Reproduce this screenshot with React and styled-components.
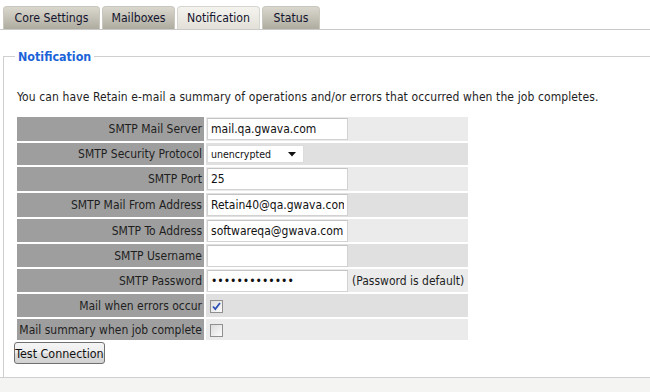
import React from "react";
import styled, { createGlobalStyle } from "styled-components";

const Global = createGlobalStyle`
  html, body { margin: 0; padding: 0; background: #fff; }
  body { font-family: "DejaVu Sans Condensed", "DejaVu Sans", Tahoma, sans-serif; font-size: 12px; color: #1e1e1e; }
  * { box-sizing: border-box; }
`;

const Page = styled.div`
  width: 650px;
  height: 392px;
  display: flex;
  flex-direction: column;
  background: #f4f4f3;
  overflow: hidden;
`;

const Main = styled.div`
  background: #fff;
  padding-top: 6px;
  border-bottom: 1px solid #cfcfcf;
`;

const TabBar = styled.div`
  display: flex;
  gap: 2px;
  padding-left: 3px;
  border-bottom: 1px solid #c9c9c9;
  height: 24px;
`;

const Tab = styled.div`
  width: ${(p) => p.$w}px;
  height: 23px;
  display: flex;
  align-items: center;
  justify-content: center;
  border: 1px solid ${(p) => (p.$active ? "#d6d5cf" : "#c9c7bd")};
  border-bottom: none;
  border-radius: 4px 4px 0 0;
  color: #14142e;
  font-size: 12.2px;
  background: ${(p) =>
    p.$active ? "linear-gradient(#f4f3ee, #e2e0d8)" : "linear-gradient(#dad8ce, #aeab9f)"};
`;

const Fieldset = styled.fieldset`
  margin: 19px 0 0 3px;
  padding: 0 0 13px 10px;
  border: 1px solid #cfcfcf;
  border-right: none;
  border-bottom: none;
  min-width: 0;
`;

const Legend = styled.legend`
  margin-left: 1px;
  padding: 0 3px;
  color: #1b63d8;
  font-weight: bold;
  font-size: 12.4px;
`;

const Intro = styled.p`
  margin: 26px 0 10px 3px;
  line-height: 15px;
  letter-spacing: 0.1px;
`;

const Table = styled.table`
  border-collapse: separate;
  border-spacing: 2px;
  margin-left: 1px;
  width: 455px;
`;

const LabelCell = styled.td`
  background: #9e9e9e;
  text-align: right;
  white-space: nowrap;
  padding: 0 2px;
  width: 187px;
  height: ${(p) => p.$h}px;
  color: #1e1e1e;
`;

const ValueCell = styled.td`
  background: ${(p) => (p.$alt ? "#e0e0e0" : "#ebebeb")};
  padding: 0 1px;
  height: ${(p) => p.$h}px;
  white-space: nowrap;
`;

const TextInput = styled.input`
  width: 141px;
  height: 22px;
  border: 1px solid #d2d2d2;
  border-top-color: #c4c4c4;
  background: #fff;
  font-family: inherit;
  font-size: 12px;
  padding: 0 3px;
  color: #111;
  vertical-align: middle;
  outline: none;
`;

const SelectBox = styled.div`
  display: inline-flex;
  align-items: center;
  justify-content: space-between;
  width: 97px;
  height: 18px;
  border: 1px solid #dcdcdc;
  background: #fff;
  font-size: 10.5px;
  padding: 0 7px 0 3px;
  color: #111;
  vertical-align: middle;
`;

const Hint = styled.span`
  margin-left: 4px;
  vertical-align: middle;
`;

const Check = styled.span`
  display: inline-flex;
  align-items: center;
  justify-content: center;
  width: 13px;
  height: 13px;
  margin-left: 3px;
  border: 1px solid #8f8f8f;
  background: linear-gradient(135deg, #dcdcdc, #fbfbfb);
  vertical-align: middle;
`;

const Button = styled.button`
  margin-top: 0;
  height: 22px;
  width: 91px;
  padding: 0;
  border: 1px solid #707070;
  border-radius: 3px;
  background: linear-gradient(#f5f5f5 0%, #ededed 50%, #dedede 51%, #d2d2d2 100%);
  font-family: inherit;
  font-size: 12.4px;
  color: #111;
`;

const rows = [
  { label: "SMTP Mail Server", type: "text", value: "mail.qa.gwava.com", h: 24 },
  { label: "SMTP Security Protocol", type: "select", value: "unencrypted", h: 22 },
  { label: "SMTP Port", type: "text", value: "25", h: 24 },
  { label: "SMTP Mail From Address", type: "text", value: "Retain40@qa.gwava.com", h: 24 },
  { label: "SMTP To Address", type: "text", value: "softwareqa@gwava.com", h: 23 },
  { label: "SMTP Username", type: "text", value: "", h: 23 },
  { label: "SMTP Password", type: "password", value: "aaaaaaaaaaaaa", h: 23 },
  { label: "Mail when errors occur", type: "check", checked: true, h: 23 },
  { label: "Mail summary when job complete", type: "check", checked: false, h: 21 },
];

const tabs = [
  { label: "Core Settings", w: 97 },
  { label: "Mailboxes", w: 73 },
  { label: "Notification", w: 83, active: true },
  { label: "Status", w: 58 },
];

function Value({ row }) {
  if (row.type === "select")
    return (
      <SelectBox>
        <span>unencrypted</span>
        <svg width="8" height="5" viewBox="0 0 8 5">
          <path d="M0 0h8L4 4.5z" fill="#111" />
        </svg>
      </SelectBox>
    );
  if (row.type === "check")
    return (
      <Check>
        {row.checked && (
          <svg width="9" height="9" viewBox="0 0 9 9">
            <path d="M1 4.5l2.3 2.6L8 1" fill="none" stroke="#2b4eb5" strokeWidth="1.7" />
          </svg>
        )}
      </Check>
    );
  if (row.type === "password")
    return (
      <>
        <TextInput type="password" readOnly value={row.value} />
        <Hint>(Password is default)</Hint>
      </>
    );
  return <TextInput readOnly value={row.value} />;
}

export default function App() {
  return (
    <>
      <Global />
      <Page>
        <Main>
          <TabBar>
            {tabs.map((t) => (
              <Tab key={t.label} $w={t.w} $active={t.active}>
                {t.label}
              </Tab>
            ))}
          </TabBar>
          <Fieldset>
            <Legend>Notification</Legend>
            <Intro>
              You can have Retain e-mail a summary of operations and/or errors that occurred when the job completes.
            </Intro>
            <Table>
              <tbody>
                {rows.map((r, i) => (
                  <tr key={r.label}>
                    <LabelCell $h={r.h}>{r.label}</LabelCell>
                    <ValueCell $h={r.h} $alt={i % 2 === 1}>
                      <Value row={r} />
                    </ValueCell>
                  </tr>
                ))}
              </tbody>
            </Table>
            <Button>Test Connection</Button>
          </Fieldset>
        </Main>
      </Page>
    </>
  );
}
